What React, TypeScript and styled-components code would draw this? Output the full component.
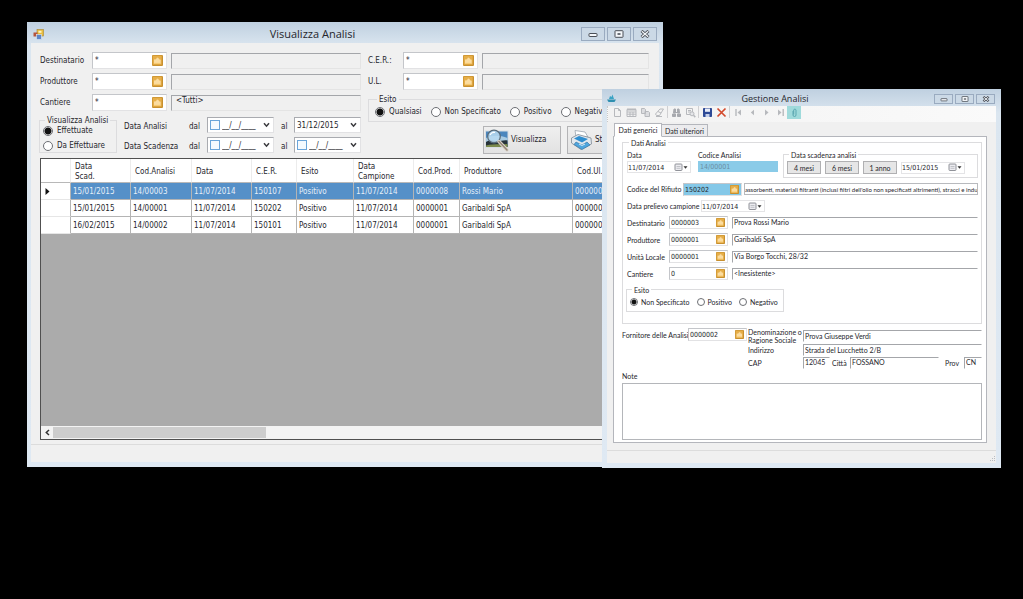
import React from "react";
import styled, { createGlobalStyle, css } from "styled-components";

const tahoma = `"DejaVu Sans Condensed", "Open Sans", sans-serif`;
const formFont = `Lato, "Liberation Sans", sans-serif`;
const caption = `"Open Sans", sans-serif`;

const GlobalStyle = createGlobalStyle`
  *, *::before, *::after { box-sizing: border-box; }
  body { margin: 0; background: #000; }
  input, button, textarea { font: inherit; color: inherit; margin: 0; padding: 0; border-radius: 0; }
  fieldset { margin: 0; min-width: 0; }
  svg { display: block; }
`;

/* ---------- desktop and window frames ---------- */

const Desktop = styled.main`
  position: relative;
  min-height: 100vh;
  min-width: 1000px;
  background: #000;
  overflow: hidden;
  color: #26262c;
  font: 8px/10px ${tahoma};
`;

const Frame = styled.section`
  position: absolute;
  display: flex;
  flex-direction: column;
  background: linear-gradient(#bfd0e0, #dbe6f0 24px, #dfe9f3);
`;

const AnalysisListWindow = styled(Frame)`
  top: 22px;
  left: 27px;
  right: 360px;
  padding: 0 4px 5px;
`;

const AnalysisFormWindow = styled(Frame)`
  top: 89px;
  right: 22px;
  width: 399px;
  padding: 0 5px 5px;
  font-family: ${formFont};
  font-size: 7px;
`;

const TitleBar = styled.header<{ $small?: boolean }>`
  display: flex;
  align-items: center;
  height: ${(p) => (p.$small ? 17 : 21)}px;
  padding: ${(p) => (p.$small ? "2px 1px 0 0" : "3px 2px 0 2px")};
  font: ${(p) => (p.$small ? "9px/12px" : "11px/14px")} ${caption};
`;

const Title = styled.h1`
  flex: 1;
  margin: 0;
  font: inherit;
  text-align: center;
`;

const CaptionButtons = styled.div`
  display: flex;
  justify-content: flex-end;
  gap: 2px;
`;

const CaptionButton = styled.button<{ $small?: boolean }>`
  display: grid;
  place-items: center;
  width: ${(p) => (p.$small ? 19 : 24)}px;
  height: ${(p) => (p.$small ? 10 : 14)}px;
  border: 1px solid #9aabc0;
  background: #cbd9e6;
  color: #4a4f57;
`;

const ClientArea = styled.div`
  display: flex;
  flex-direction: column;
  gap: 4px;
  background: #f0f0f0;
  padding: 9px 10px 4px 9px;
`;

const FormBody = styled.div`
  display: flex;
  flex-direction: column;
  background: #f0f0f0;
`;

const StatusBar = styled.footer<{ $small?: boolean }>`
  display: flex;
  align-items: flex-end;
  justify-content: flex-end;
  height: ${(p) => (p.$small ? 13 : 18)}px;
  border-top: 1px solid #dcdcdc;
  background: #f0f0f0;
`;

/* ---------- shared controls ---------- */

const sunken = css`
  border: 1px solid #e2e2e4;
  border-top-color: #a9abb0;
  border-left-color: #a9abb0;
`;

const LookupBox = styled.span<{ $small?: boolean; $tint?: boolean }>`
  display: flex;
  align-items: center;
  width: ${(p) => (p.$small ? 59 : 75)}px;
  height: ${(p) => (p.$small ? 13 : 17)}px;
  padding: ${(p) => (p.$small ? "0 2px 0 1px" : "0 3px 0 2px")};
  ${sunken}
  border-top-color: #c4c6ca;
  border-left-color: #c4c6ca;
  background: ${(p) => (p.$tint ? "#84c8e8" : "#fff")};
`;

const PlainInput = styled.input`
  flex: 1;
  min-width: 0;
  width: 100%;
  height: 100%;
  border: 0;
  background: transparent;
  outline: 0;
`;

const CodeInput = styled(PlainInput)<{ $small?: boolean }>`
  padding-top: ${(p) => (p.$small ? 1 : 0)}px;
  font: ${(p) => (p.$small ? "7px" : "8px")} ${tahoma};
`;

const LookupButton = styled.button<{ $small?: boolean }>`
  flex: none;
  width: ${(p) => (p.$small ? 9 : 11)}px;
  height: ${(p) => (p.$small ? 9 : 11)}px;
  border: 0;
  background: none;
`;

const Display = styled.input<{ $white?: boolean; $w?: number }>`
  ${(p) => (p.$w ? `flex: none; width: ${p.$w}px;` : "flex: 1; width: 100%; min-width: 0;")}
  height: ${(p) => (p.$white ? 12 : 16)}px;
  padding: ${(p) => (p.$white ? "0 1px 1px" : "0 4px 4px")};
  line-height: normal;
  border: 1px solid ${(p) => (p.$white ? "#fff" : "#e4e4e4")};
  border-top-color: #a4a6aa;
  border-left-color: #a4a6aa;
  background: ${(p) => (p.$white ? "#fff" : "#f0f0f0")};
  outline: 0;
`;

const Group = styled.fieldset`
  border: 1px solid #dcdcde;
  padding: 2px 3px 3px;
`;

const Legend = styled.legend`
  height: 10px;
  line-height: 12px;
  padding: 0 2px;
  margin-left: 2px;
`;

const RadioLabel = styled.label<{ $small?: boolean }>`
  display: flex;
  align-items: center;
  gap: ${(p) => (p.$small ? 3 : 4)}px;
  height: 12px;
  white-space: nowrap;
`;

const RadioInput = styled.input<{ $small?: boolean }>`
  appearance: none;
  flex: none;
  width: ${(p) => (p.$small ? 8 : 10)}px;
  height: ${(p) => (p.$small ? 8 : 10)}px;
  border: 1px solid #6d6f74;
  border-radius: 50%;
  background: #fff;
  &:checked {
    background: radial-gradient(circle, #111 0 ${(p) => (p.$small ? 2 : 3)}px, #fff ${(p) => (p.$small ? 3 : 4)}px);
  }
`;

const FolderMark = ({ size }: { size: number }) => (
  <svg width={size} height={size} viewBox="0 0 11 11" aria-hidden="true">
    <rect width="11" height="11" rx="1" fill="#c8902f" />
    <rect x=".7" y=".7" width="9" height="9" fill="#e6ae48" />
    <path d="M2 8.8V4.6L4 4.2 5 2.6l1.4.3.7 1.4 1.6.4v4.1z" fill="#fbdca0" />
    <path d="M2.4 8.4h6" stroke="#f6c667" strokeWidth=".8" />
  </svg>
);

function Lookup({ id, value, small, tint }: { id: string; value: string; small?: boolean; tint?: boolean }) {
  return (
    <LookupBox $small={small} $tint={tint}>
      <CodeInput id={id} defaultValue={value} $small={small} />
      <LookupButton type="button" $small={small} aria-label="Cerca">
        <FolderMark size={small ? 9 : 11} />
      </LookupButton>
    </LookupBox>
  );
}

function Radio({ name, label, checked, small }: { name: string; label: string; checked?: boolean; small?: boolean }) {
  return (
    <RadioLabel $small={small}>
      <RadioInput type="radio" name={name} defaultChecked={checked} $small={small} />
      {label}
    </RadioLabel>
  );
}

function WindowButtons({ small }: { small?: boolean }) {
  const w = small ? 8 : 10;
  const h = small ? 6 : 8;
  return (
    <CaptionButtons>
      <CaptionButton $small={small} type="button" aria-label="Riduci a icona">
        <svg width={w} height={h} viewBox="0 0 10 8" fill="#f4f7fa" stroke="currentColor">
          <rect x="1" y="3.5" width="8" height="3" rx=".5" />
        </svg>
      </CaptionButton>
      <CaptionButton $small={small} type="button" aria-label="Ingrandisci">
        <svg width={w} height={h} viewBox="0 0 10 8" fill="#f4f7fa" stroke="currentColor">
          <rect x="1" y=".7" width="8" height="6.6" rx=".5" />
          <path d="M3.5 4h3" strokeWidth="1.6" />
        </svg>
      </CaptionButton>
      <CaptionButton $small={small} type="button" aria-label="Chiudi">
        <svg width={w} height={h} viewBox="0 0 10 8">
          <path d="M1.5.9 8.5 7.1M8.5.9 1.5 7.1" stroke="#4a4f57" strokeWidth="3" />
          <path d="M1.8 1.2 8.2 6.8M8.2 1.2 1.8 6.8" stroke="#f4f7fa" strokeWidth="1.2" />
        </svg>
      </CaptionButton>
    </CaptionButtons>
  );
}

/* ---------- "Visualizza Analisi" ---------- */

const Filters = styled.form`
  display: grid;
  grid-template-columns: 321px minmax(0, 1fr);
  column-gap: 7px;
`;

const FilterColumn = styled.div`
  display: flex;
  flex-direction: column;
  gap: 4px;
`;

const FilterRow = styled.div`
  display: flex;
  align-items: center;
  height: 17px;
  gap: 4px;
`;

const FilterLabel = styled.label<{ $w: number }>`
  flex: none;
  width: ${(p) => p.$w}px;
`;

const DateArea = styled.div`
  display: flex;
  align-items: flex-end;
  gap: 7px;
  margin-left: -1px;
`;

const StateGroup = styled(Group)`
  display: flex;
  flex-direction: column;
  gap: 3px;
  flex: none;
  width: 78px;
  padding: 0 3px;
`;

const DateGrid = styled.div`
  display: grid;
  grid-template-columns: 65px 18px 67px 20px 67px;
  grid-auto-rows: 16px;
  row-gap: 4px;
  align-items: center;
`;

const RangeWord = styled.span<{ $indent?: boolean }>`
  padding-top: 3px;
  padding-left: ${(p) => (p.$indent ? 7 : 0)}px;
`;

const DateBox = styled.span`
  display: flex;
  align-items: center;
  gap: 2px;
  height: 16px;
  padding: 0 2px;
  background: #fff;
  ${sunken}
`;

const DateTick = styled.input`
  appearance: none;
  flex: none;
  width: 10px;
  height: 10px;
  border: 1px solid #6aa5da;
  background: #f4faff;
`;

const DropButton = styled.button`
  flex: none;
  width: 9px;
  height: 12px;
  border: 0;
  background: none;
  display: grid;
  place-items: center;
`;

const OutcomeGroup = styled(Group)`
  display: flex;
  justify-content: flex-start;
  gap: 9px;
  padding: 2px 6px 3px;
`;

const Actions = styled.div`
  display: flex;
  justify-content: flex-end;
  gap: 6px;
  padding-right: 4px;
`;

const ActionButton = styled.button`
  display: flex;
  align-items: center;
  gap: 1px;
  width: 78px;
  height: 28px;
  padding-left: 1px;
  border: 1px solid #b4b4b6;
  background: linear-gradient(#efefef, #e2e2e2);
`;

const GridBox = styled.div`
  border: 1px solid #505050;
  background: #ababab;
  overflow: hidden;
`;

const DataTable = styled.table`
  width: 100%;
  table-layout: fixed;
  border-collapse: separate;
  border-spacing: 0;
`;

const HeadCell = styled.th<{ $w?: number }>`
  ${(p) => (p.$w ? `width: ${p.$w}px;` : "")}
  height: 24px;
  padding: 2px 0 0 4px;
  border-right: 1px solid #ececec;
  border-bottom: 1px solid #b8b8b8;
  background: #fff;
  font-weight: normal;
  text-align: left;
  white-space: pre-line;
`;

const Row = styled.tr<{ $selected?: boolean }>`
  color: ${(p) => (p.$selected ? "#e6eff8" : "inherit")};
  background: ${(p) => (p.$selected ? "#5590c8" : "#fff")};
`;

const Cell = styled.td`
  height: 17px;
  padding: 2px 0 0 2px;
  border-right: 1px solid #b4b4b4;
  border-bottom: 1px solid #b4b4b4;
  white-space: nowrap;
  overflow: hidden;
`;

const RowMarker = styled.th`
  height: 17px;
  padding: 0 0 0 4px;
  background: #fff;
  border-right: 1px solid #b4b4b4;
  border-bottom: 1px solid #e6e6e6;
`;

const EmptyArea = styled.div`
  height: 192px;
`;

const ScrollTrack = styled.div`
  display: grid;
  grid-template-columns: 12px 213px 1fr;
  height: 13px;
  background: #f3f3f3;
`;

const ScrollArrow = styled.button`
  border: 0;
  background: none;
  display: grid;
  place-items: center;
`;

const ScrollThumb = styled.div`
  margin: 1px 0;
  background: #cdcdcd;
`;

const columns: [string, number?][] = [
  ["Data\nScad.", 60],
  ["Cod.Analisi", 61],
  ["Data", 60],
  ["C.E.R.", 45],
  ["Esito", 57],
  ["Data\nCampione", 60],
  ["Cod.Prod.", 46],
  ["Produttore", 113],
  ["Cod.Ul."],
];

const rows = [
  ["15/01/2015", "14/00003", "11/07/2014", "150107", "Positivo", "11/07/2014", "0000008", "Rossi Mario", "0000001"],
  ["15/01/2015", "14/00001", "11/07/2014", "150202", "Positivo", "11/07/2014", "0000001", "Garibaldi SpA", "0000001"],
  ["16/02/2015", "14/00002", "11/07/2014", "150101", "Positivo", "11/07/2014", "0000001", "Garibaldi SpA", "0000001"],
];

const FormsIcon = () => (
  <svg width="11" height="11" viewBox="0 0 11 11" aria-hidden="true">
    <rect x="4" y=".5" width="6.5" height="6.5" fill="#e8bd3f" stroke="#a88430" strokeWidth=".6" />
    <rect x="5.5" y="1.8" width="3" height="2" fill="#fff3c0" />
    <rect x=".5" y="3.5" width="4" height="4" fill="#b5543c" />
    <rect x="3.5" y="5.5" width="5" height="5" fill="#5f86c6" stroke="#e3ebf5" strokeWidth=".6" />
  </svg>
);

const LandscapeIcon = () => (
  <svg width="25" height="23" viewBox="0 0 25 23" aria-hidden="true">
    <rect x=".5" y="2" width="22.5" height="16.5" fill="#4b86bd" stroke="#d7dde2" />
    <path d="M1 9c6-3 14-3 21.500 0v4H1z" fill="#a9cbe2" />
    <path d="M1 13c4-2.500 7-1 11-1s8-1.500 10.500-.500V18H1z" fill="#26323a" />
    <path d="M1 16.500c6-2 14-1 21.500-1.500v3H1z" fill="#7c8b4d" />
    <circle cx="9" cy="7.500" r="6.300" fill="#b9dbf1" fillOpacity=".85" stroke="#586a78" strokeWidth="1.200" />
    <path d="M5 6c1-2 3-3 5-2.500" stroke="#fff" strokeWidth="1.200" fill="none" />
    <path d="m14 12.500 8 8.500" stroke="#ddd6cc" strokeWidth="3.400" strokeLinecap="round" />
    <path d="m14 12.500 8 8.500" stroke="#94877a" strokeWidth="1.600" strokeLinecap="round" />
  </svg>
);

const PrinterIcon = () => (
  <svg width="25" height="22" viewBox="-1 0 25 22" aria-hidden="true">
    <path d="M5 1.500 15 3l3 5-12-.500z" fill="#fff" stroke="#9aa4ae" strokeWidth=".8" />
    <path d="M1.500 9 8 5.500l13 3.500.5 6L11 20.500 1.500 14z" fill="#e2e8ee" stroke="#7e8a96" strokeWidth=".8" />
    <path d="m4 9.500 5-2.500 9 3-6 3.500z" fill="#2f8ed0" />
    <path d="m6 13 6 3 5-3 3 3-8 4.500-8-5z" fill="#4fa6de" stroke="#2d6d9e" strokeWidth=".6" />
    <path d="m9 15 3 1.500 3-1.500" stroke="#d5ecf9" fill="none" />
  </svg>
);

const Chevron = () => (
  <svg width="7" height="6" viewBox="0 0 7 6" aria-hidden="true">
    <path d="M1 1.200 3.500 4.200 6 1.200" fill="none" stroke="#3c3c40" strokeWidth="1.500" />
  </svg>
);

function DateField({ label, value, tick }: { label: string; value: string; tick?: boolean }) {
  return (
    <DateBox>
      {tick && <DateTick type="checkbox" aria-label={`${label} attiva`} />}
      <PlainInput aria-label={label} defaultValue={value} />
      <DropButton type="button" aria-label={`${label}: apri calendario`}>
        <Chevron />
      </DropButton>
    </DateBox>
  );
}

function FilterLine({ id, label, text = "", w }: { id: string; label: string; text?: string; w: number }) {
  return (
    <FilterRow>
      <FilterLabel htmlFor={id} $w={w - 4}>
        {label}
      </FilterLabel>
      <Lookup id={id} value="*" />
      <Display readOnly aria-label={`${label} descrizione`} value={text} />
    </FilterRow>
  );
}

function AnalysisList() {
  return (
    <AnalysisListWindow>
      <TitleBar>
        <FormsIcon />
        <Title>Visualizza Analisi</Title>
        <WindowButtons />
      </TitleBar>
      <ClientArea>
        <Filters>
          <FilterColumn>
            <FilterLine id="f-dest" label="Destinatario" w={52} />
            <FilterLine id="f-prod" label="Produttore" w={52} />
            <FilterLine id="f-cant" label="Cantiere" w={52} text="<Tutti>" />
            <DateArea>
              <StateGroup>
                <Legend>Visualizza Analisi</Legend>
                <Radio name="stato" label="Effettuate" checked />
                <Radio name="stato" label="Da Effettuare" />
              </StateGroup>
              <DateGrid>
                <RangeWord>Data Analisi</RangeWord>
                <RangeWord>dal</RangeWord>
                <DateField label="Data analisi dal" value="__/__/____" tick />
                <RangeWord $indent>al</RangeWord>
                <DateField label="Data analisi al" value="31/12/2015" />
                <RangeWord>Data Scadenza</RangeWord>
                <RangeWord>dal</RangeWord>
                <DateField label="Data scadenza dal" value="__/__/____" tick />
                <RangeWord $indent>al</RangeWord>
                <DateField label="Data scadenza al" value="__/__/____" tick />
              </DateGrid>
            </DateArea>
          </FilterColumn>
          <FilterColumn>
            <FilterLine id="f-cer" label="C.E.R.:" w={35} />
            <FilterLine id="f-ul" label="U.L." w={35} />
            <OutcomeGroup>
              <Legend>Esito</Legend>
              <Radio name="esito" label="Qualsiasi" checked />
              <Radio name="esito" label="Non Specificato" />
              <Radio name="esito" label="Positivo" />
              <Radio name="esito" label="Negativo" />
            </OutcomeGroup>
            <Actions>
              <ActionButton type="button">
                <LandscapeIcon />
                Visualizza
              </ActionButton>
              <ActionButton type="button">
                <PrinterIcon />
                Stampa
              </ActionButton>
            </Actions>
          </FilterColumn>
        </Filters>
        <GridBox>
          <DataTable>
            <thead>
              <tr>
                <HeadCell $w={30} aria-label="Selezione" />
                {columns.map(([name, w]) => (
                  <HeadCell key={name} $w={w} scope="col">
                    {name}
                  </HeadCell>
                ))}
              </tr>
            </thead>
            <tbody>
              {rows.map((cells, r) => (
                <Row key={cells[1]} $selected={r === 0}>
                  <RowMarker scope="row" aria-label={`Riga ${r + 1}`}>
                    {r === 0 && (
                      <svg width="5" height="7" viewBox="0 0 5 7" aria-hidden="true">
                        <path d="M.5 0 4.500 3.500.5 7z" fill="#111" />
                      </svg>
                    )}
                  </RowMarker>
                  {cells.map((c, i) => (
                    <Cell key={i}>{c}</Cell>
                  ))}
                </Row>
              ))}
            </tbody>
          </DataTable>
          <EmptyArea />
          <ScrollTrack>
            <ScrollArrow type="button" aria-label="Scorri a sinistra">
              <svg width="5" height="7" viewBox="0 0 5 7">
                <path d="M4 1 1.300 3.500 4 6" fill="none" stroke="#333" strokeWidth="1.500" />
              </svg>
            </ScrollArrow>
            <ScrollThumb />
          </ScrollTrack>
        </GridBox>
      </ClientArea>
      <StatusBar />
    </AnalysisListWindow>
  );
}

/* ---------- "Gestione Analisi" ---------- */

const Toolbar = styled.div`
  display: flex;
  align-items: flex-start;
  height: 16px;
  padding-left: 2px;
  background: linear-gradient(90deg, #f2f2f2, #fafafa);
  border-left: 1px dotted #c8c8c8;
`;

const ToolButton = styled.button<{ $active?: boolean }>`
  display: grid;
  place-items: center;
  flex: none;
  width: 14px;
  height: 13px;
  border: 0;
  background: ${(p) => (p.$active ? "#9fdadb" : "none")};
`;

const ToolDivider = styled.span`
  flex: none;
  width: 1px;
  height: 12px;
  margin: 0 1px;
  background: #d0d0d2;
`;

const Tabs = styled.nav`
  display: flex;
  align-items: flex-end;
  height: 14px;
  padding-left: 7px;
`;

const Tab = styled.button<{ $active?: boolean }>`
  height: ${(p) => (p.$active ? 14 : 12)}px;
  width: ${(p) => (p.$active ? 48 : 46)}px;
  margin-bottom: ${(p) => (p.$active ? -1 : 0)}px;
  border: 1px solid #b4b6bc;
  ${(p) => (p.$active ? "border-bottom-color: #fff;" : "border-left: 0; border-bottom: 0;")}
  background: ${(p) => (p.$active ? "#fff" : "#ececee")};
  position: relative;
  white-space: nowrap;
`;

const TabArea = styled.div`
  padding-bottom: 7px;
`;

const TabPage = styled.form`
  margin: 0 9px 0 6px;
  padding: 0 4px 2px 8px;
  border: 1px solid #b4b6bc;
  background: #fff;
`;

const MainGroup = styled(Group)`
  display: flex;
  flex-direction: column;
  gap: 4px;
  padding: 2px 3px 11px 4px;
`;

const FormRow = styled.div<{ $h?: number; $top?: boolean }>`
  display: flex;
  align-items: ${(p) => (p.$top ? "flex-start" : "center")};
  ${(p) => (p.$h ? `height: ${p.$h}px;` : "")}
`;

const FormLabel = styled.label<{ $w: number }>`
  flex: none;
  width: ${(p) => p.$w}px;
  white-space: nowrap;
`;

const StackedField = styled.div<{ $w: number }>`
  display: flex;
  flex-direction: column;
  flex: none;
  width: ${(p) => p.$w}px;
`;

const StackedLabel = styled.label`
  line-height: 12px;
`;

const Picker = styled.span`
  display: flex;
  align-items: center;
  flex: none;
  width: 64px;
  height: 12px;
  padding: 0 2px 0 0;
  border: 1px solid #e4e4e6;
`;

const PickerButton = styled.button`
  flex: none;
  width: 14px;
  height: 9px;
  border: 0;
  background: none;
`;

const CodeField = styled.input`
  width: 80px;
  height: 11px;
  padding: 0 2px;
  border: 0;
  background: #8acbe8;
  color: #6b8ea3;
  font: 7px ${tahoma};
`;

const DeadlineGroup = styled(Group)`
  display: flex;
  align-items: center;
  gap: 4px;
  flex: 1;
  margin-left: 5px;
`;

const MonthButton = styled.button`
  flex: none;
  width: 34px;
  height: 13px;
  border: 1px solid #b0b0b2;
  background: #e6e6e6;
`;

const WasteText = styled.input`
  flex: 1;
  min-width: 0;
  height: 12px;
  margin-left: 2px;
  padding: 0;
  border: 1px solid #b8babe;
  background: #fff;
  font-size: 6px;
`;

const ResultGroup = styled(Group)`
  display: flex;
  gap: 7px;
  width: 158px;
  margin-left: -1px;
`;

const SupplierRow = styled.div`
  display: flex;
  align-items: flex-start;
  padding-top: 4px;
`;

const SupplierGrid = styled.div`
  display: grid;
  flex: 1;
  min-width: 0;
  grid-template-columns: 55px minmax(0, 1fr);
  grid-template-rows: 16px 12px 13px;
  align-items: center;
  margin-left: 1px;
`;

const TwoLineLabel = styled.label`
  line-height: 8px;
  white-space: pre;
`;

const InlineFields = styled.div`
  display: flex;
  align-items: center;
`;

const InlineLabel = styled.label<{ $w: number }>`
  flex: none;
  width: ${(p) => p.$w}px;
  padding-left: 2px;
`;

const Gap = styled.span`
  flex: 0 0 4px;
`;

const NoteLabel = styled.label`
  display: block;
  padding: 2px 0;
`;

const NoteBox = styled.textarea`
  display: block;
  width: 100%;
  height: 57px;
  border: 1px solid #b4b6ba;
  background: #fff;
  resize: none;
  outline: 0;
`;

const BoatIcon = () => (
  <svg width="9" height="9" viewBox="0 0 9 9" aria-hidden="true">
    <path d="M0 5.500h9L7.500 8h-6z" fill="#2e8fb0" />
    <path d="M2 5 3 2l1.500 1L5.500.5 7 5z" fill="#3aa3c4" />
  </svg>
);

const ToolIcon = ({ children }: { children: React.ReactNode }) => (
  <svg width="11" height="11" viewBox="0 0 11 11" fill="none" stroke="#b7b9bd" aria-hidden="true">
    {children}
  </svg>
);

const tools: ({ name: string; icon: React.ReactNode; active?: boolean } | null)[] = [
  { name: "Nuovo", icon: <path d="M2.500 1.500h4l2 2v6h-6zM6.500 1.500v2h2" /> },
  { name: "Apri", icon: <><path d="M1 2.500h9v7H1zM1 5h9M1 7.200h9M4 5v4.500M7 5v4.500" /><path d="M1 2.500h9" strokeWidth="2" /></> },
  { name: "Copia", icon: <path d="M1.500 1.500h3l1 1v4h-4zM5 4.500h3.500l1 1v4H5z" fill="#dcdde0" /> },
  { name: "Cancella", icon: <path d="M1.500 7 6 2h3.500L5.500 8.500h-3zM4 4.500l3 1.500M2 9.500h6" /> },
  null,
  { name: "Cerca", icon: <path d="M1.500 7h3v2.500h-3zM6.500 7h3v2.500h-3zM3 2h1.500v4h-2zM6.500 6V2H8l.5 4zM4 5.500h3" fill="#a7a9ae" stroke="#a7a9ae" /> },
  { name: "Anteprima", icon: <><path d="M1.500 1.500h6v6h-6zM3 3.500h3M3 5h3" /><circle cx="7" cy="6.800" r="2" fill="#e4e5e8" /><path d="m8.500 8.300 1.800 1.800" strokeWidth="1.500" /></> },
  null,
  { name: "Salva", icon: <><path d="M1.500 1.500h8v8h-8z" fill="#2e4a96" stroke="#2e4a96" /><path d="M3 1.500h5v3.300H3z" fill="#e8edf8" stroke="none" /><path d="M3.500 7h4v3h-4z" fill="#c5d0ea" stroke="none" /></> },
  { name: "Elimina", icon: <path d="M1.500 1.500 9.500 9.500M9.500 1.500 1.500 9.500" stroke="#d3492c" strokeWidth="1.700" /> },
  null,
  { name: "Primo", icon: <><path d="M3 2v7" strokeWidth="1.400" /><path d="M8 2.500v6l-3.500-3z" fill="#b7b9bd" stroke="none" /></> },
  { name: "Precedente", icon: <path d="M7 2.800v5.400L3.800 5.500z" fill="#b7b9bd" stroke="none" /> },
  { name: "Successivo", icon: <path d="M4 2.500v6l3.500-3z" fill="#b7b9bd" stroke="none" /> },
  { name: "Ultimo", icon: <><path d="M8.200 2v7" strokeWidth="1.400" /><path d="M3 2.500v6l3.500-3z" fill="#b7b9bd" stroke="none" /></> },
  { name: "Allegati", active: true, icon: <path d="M4 4v4a1.500 1.500 0 0 0 3 0V3a1.200 1.200 0 0 0-2.300 0v4.500" stroke="#5aa7b0" /> },
];

function DatePicker({ id, value, label }: { id?: string; value: string; label: string }) {
  return (
    <Picker>
      <CodeInput $small id={id} aria-label={label} defaultValue={value} />
      <PickerButton type="button" aria-label={`${label}: apri calendario`}>
        <svg width="14" height="9" viewBox="0 0 14 9">
          <rect x="1" y="1" width="7" height="6.500" rx=".8" fill="#ececf0" stroke="#85878d" strokeWidth=".9" />
          <path d="M2.500 3.500h4M2.500 5.300h4" stroke="#b5b7bd" strokeWidth=".8" />
          <path d="M9.500 3.300h4l-2 2.400z" fill="#333" />
        </svg>
      </PickerButton>
    </Picker>
  );
}

const parties = [
  { id: "g-dest", label: "Destinatario", code: "0000003", text: "Prova Rossi Mario" },
  { id: "g-prod", label: "Produttore", code: "0000001", text: "Garibaldi SpA" },
  { id: "g-ul", label: "Unità Locale", code: "0000001", text: "Via Borgo Tocchi, 28/32" },
  { id: "g-cant", label: "Cantiere", code: "0", text: "<Inesistente>" },
];

function AnalysisForm() {
  return (
    <AnalysisFormWindow>
      <TitleBar $small>
        <BoatIcon />
        <Title>Gestione Analisi</Title>
        <WindowButtons small />
      </TitleBar>
      <FormBody>
        <Toolbar>
          {tools.map((t, i) =>
            t ? (
              <ToolButton key={i} type="button" aria-label={t.name} $active={t.active}>
                <ToolIcon>{t.icon}</ToolIcon>
              </ToolButton>
            ) : (
              <ToolDivider key={i} />
            )
          )}
        </Toolbar>
        <Tabs>
          <Tab type="button" $active>
            Dati generici
          </Tab>
          <Tab type="button">Dati ulteriori</Tab>
        </Tabs>
        <TabArea>
          <TabPage>
            <MainGroup>
              <Legend>Dati Analisi</Legend>
              <FormRow $top>
                <StackedField $w={71}>
                  <StackedLabel htmlFor="g-data">Data</StackedLabel>
                  <DatePicker id="g-data" value="11/07/2014" label="Data" />
                </StackedField>
                <StackedField $w={80}>
                  <StackedLabel htmlFor="g-cod">Codice Analisi</StackedLabel>
                  <CodeField id="g-cod" readOnly value="14/00001" />
                </StackedField>
                <DeadlineGroup>
                  <Legend>Data scadenza analisi</Legend>
                  <MonthButton type="button">4 mesi</MonthButton>
                  <MonthButton type="button">6 mesi</MonthButton>
                  <MonthButton type="button">1 anno</MonthButton>
                  <DatePicker value="15/01/2015" label="Data scadenza analisi" />
                </DeadlineGroup>
              </FormRow>
              <FormRow $h={14}>
                <FormLabel htmlFor="g-cer" $w={56}>
                  Codice del Rifiuto
                </FormLabel>
                <Lookup id="g-cer" value="150202" small tint />
                <WasteText
                  aria-label="Descrizione rifiuto"
                  readOnly
                  value="assorbenti, materiali filtranti (inclusi filtri dell'olio non specificati altrimenti), stracci e indumenti protettivi"
                />
              </FormRow>
              <FormRow>
                <FormLabel htmlFor="g-prel" $w={74}>
                  Data prelievo campione
                </FormLabel>
                <DatePicker id="g-prel" value="11/07/2014" label="Data prelievo campione" />
              </FormRow>
              {parties.map((p) => (
                <FormRow $h={13} key={p.id}>
                  <FormLabel htmlFor={p.id} $w={42}>
                    {p.label}
                  </FormLabel>
                  <Lookup id={p.id} value={p.code} small />
                  <Gap />
                  <Display $white readOnly aria-label={`${p.label} descrizione`} value={p.text} />
                </FormRow>
              ))}
              <ResultGroup>
                <Legend>Esito</Legend>
                <Radio small name="risultato" label="Non Specificato" checked />
                <Radio small name="risultato" label="Positivo" />
                <Radio small name="risultato" label="Negativo" />
              </ResultGroup>
            </MainGroup>
            <SupplierRow>
              <FormRow $h={13}>
                <FormLabel htmlFor="g-forn" $w={66}>
                  Fornitore delle Analisi
                </FormLabel>
                <Lookup id="g-forn" value="0000002" small />
              </FormRow>
              <SupplierGrid>
                <TwoLineLabel htmlFor="g-rag">{"Denominazione o\nRagione Sociale"}</TwoLineLabel>
                <Display $white readOnly id="g-rag" value="Prova Giuseppe Verdi" />
                <label htmlFor="g-ind">Indirizzo</label>
                <Display $white readOnly id="g-ind" value="Strada del Lucchetto 2/B" />
                <label htmlFor="g-cap">CAP</label>
                <InlineFields>
                  <Display $white $w={27} readOnly id="g-cap" value="12045" />
                  <InlineLabel $w={20} htmlFor="g-cit">Città</InlineLabel>
                  <Display $white readOnly id="g-cit" value="FOSSANO" />
                  <Gap />
                  <InlineLabel $w={21} htmlFor="g-prov">Prov</InlineLabel>
                  <Display $white $w={18} readOnly id="g-prov" value="CN" />
                </InlineFields>
              </SupplierGrid>
            </SupplierRow>
            <NoteLabel htmlFor="g-note">Note</NoteLabel>
            <NoteBox id="g-note" />
          </TabPage>
        </TabArea>
      </FormBody>
      <StatusBar $small>
        <svg width="7" height="7" viewBox="0 0 7 7" fill="#b8bcc2" aria-hidden="true">
          <path d="M5 0h1v1H5zM3 2h1v1H3zM5 2h1v1H5zM1 4h1v1H1zM3 4h1v1H3zM5 4h1v1H5z" />
        </svg>
      </StatusBar>
    </AnalysisFormWindow>
  );
}

export default function App() {
  return (
    <>
      <GlobalStyle />
      <Desktop>
        <AnalysisList />
        <AnalysisForm />
      </Desktop>
    </>
  );
}
